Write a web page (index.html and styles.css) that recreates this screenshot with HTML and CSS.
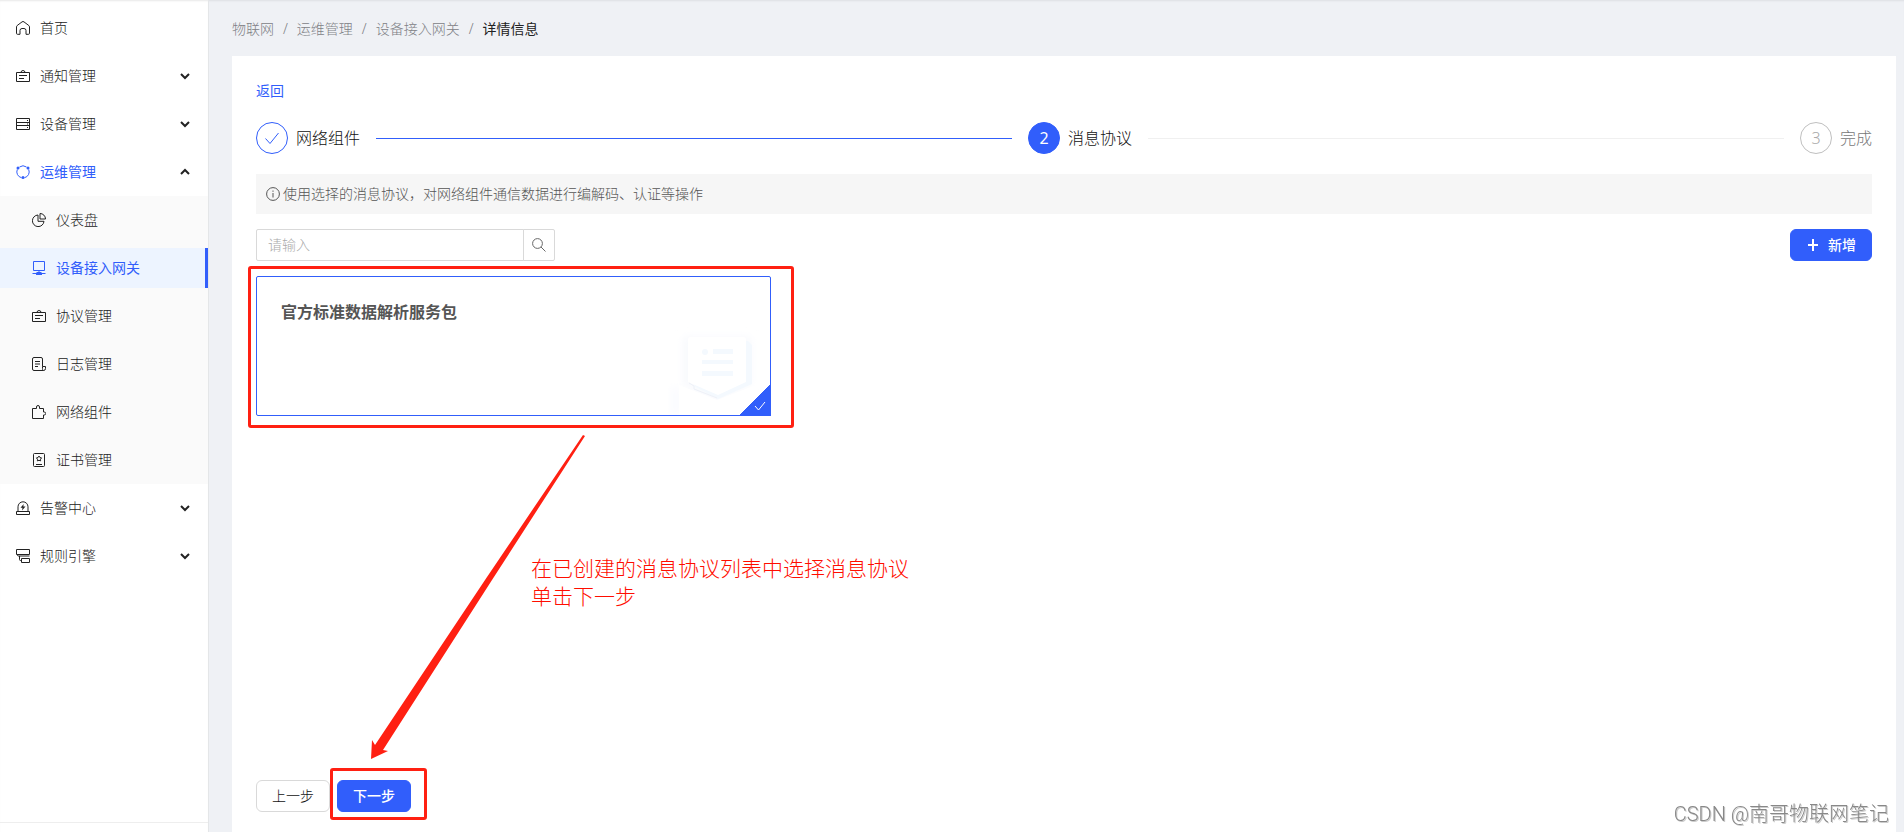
FILE: index.html
```html
<!DOCTYPE html>
<html lang="zh-CN">
<head>
<meta charset="utf-8">
<meta name="viewport" content="width=device-width, initial-scale=1">
<title>设备接入网关 - 详情信息</title>
<link rel="stylesheet" href="styles.css">
</head>
<body>
<svg class="symbols" aria-hidden="true">
  <symbol id="chevron" viewBox="0 0 10 10"><path d="M1 3l4 4 4-4" stroke-width="2"/></symbol>
  <symbol id="badge" viewBox="0 0 14 14"><path d="M.5 3.500h13v9H.5zM5 3.500a2 2 0 0 1 4 0M3 6.500h8M3 9.500h5"/></symbol>
</svg>
<div class="app">
  <aside class="sidebar">
    <nav class="menu">
      <a class="item" href="#"><svg class="icon" viewBox="0 0 14 14"><path d="M4 13.300H1.500a1 1 0 0 1-1-1V6a2 2 0 0 1 .7-1.500L6 .9a1.600 1.600 0 0 1 2 0l4.800 3.600A2 2 0 0 1 13.500 6v6.300a1 1 0 0 1-1 1H10V9.500a2 2 0 0 0-2-2H6a2 2 0 0 0-2 2z"/></svg>首页</a>
      <a class="item" href="#"><svg class="icon"><use href="#badge"/></svg>通知管理<svg class="chevron"><use href="#chevron"/></svg></a>
      <a class="item" href="#"><svg class="icon" viewBox="0 0 14 14"><path d="M.5 1.500h13v11H.5zM.5 5.500h13M.5 8.500h13M11 3.500h1M11 7h1M11 10.500h1"/></svg>设备管理<svg class="chevron"><use href="#chevron"/></svg></a>
      <a class="item open" href="#"><svg class="icon" viewBox="0 0 14 14"><path d="M3.500 2a6 6 0 0 1 7 0M12.700 4.500A6 6 0 0 1 8.500 12.700M5.500 12.700A6 6 0 0 1 1.300 4.500"/><circle class="dot" cx="2" cy="3" r="1.500"/><circle class="dot" cx="12" cy="3" r="1.500"/><circle class="dot" cx="7" cy="12.500" r="1.500"/></svg>运维管理<svg class="chevron up"><use href="#chevron"/></svg></a>
      <div class="submenu">
        <a class="item" href="#"><svg class="icon" viewBox="0 0 14 14"><path d="M6 2A5.800 5.800 0 1 0 12 8.300H6zM8 .5V6h5.500A5.500 5.500 0 0 0 8 .5z"/></svg>仪表盘</a>
        <a class="item current" href="#" aria-current="page"><svg class="icon" viewBox="0 0 14 14"><path d="M1.500.5h11v9h-11zM7 9.500V11M.5 12.500h13"/><path class="dot" d="M5 11h4l1 1v2H4v-2z"/></svg>设备接入网关</a>
        <a class="item" href="#"><svg class="icon"><use href="#badge"/></svg>协议管理</a>
        <a class="item" href="#"><svg class="icon" viewBox="0 0 14 14"><path d="M10.500 9.500V2a1.500 1.500 0 0 0-1.500-1.500H2A1.500 1.500 0 0 0 .5 2v10A1.500 1.500 0 0 0 2 13.500h9.500a2 2 0 0 0 2-2v-2h-3v2a2 2 0 0 0 1 2M3 4.500h5M3 7h5M3 9.500h3"/></svg>日志管理</a>
        <a class="item" href="#"><svg class="icon" viewBox="0 0 14 14"><path d="M.5 3.500h4V2a1.500 1.500 0 0 1 3 0v1.500h4V7h.700a1.500 1.500 0 0 1 0 3h-.7v3.500H.5z"/></svg>网络组件</a>
        <a class="item" href="#"><svg class="icon" viewBox="0 0 14 14"><rect x="1.500" y=".5" width="11" height="13" rx="1"/><path d="M4 11.500h6M7 3l.9 1.500 1.700.4-1.100 1.300.1 1.700L7 7.300l-1.600.6.1-1.700-1.100-1.300 1.700-.4z"/></svg>证书管理</a>
      </div>
      <a class="item" href="#"><svg class="icon" viewBox="0 0 14 14"><path d="M.5 10.500h13v3H.5zM2 10.500V5.800a5 5 0 0 1 10 0v4.700"/><path class="dot" d="M7.700 3L4.500 6.800h2L6 9.500l3.500-4H7.300z"/></svg>告警中心<svg class="chevron"><use href="#chevron"/></svg></a>
      <a class="item" href="#"><svg class="icon" viewBox="0 0 14 14"><path d="M.5.500h13v5H.5zM5.500 9.500h8v4h-8zM1.500 5.500V6a1 1 0 0 0 1 1h11M3.500 7v3.500a1 1 0 0 0 1 1h1"/></svg>规则引擎<svg class="chevron"><use href="#chevron"/></svg></a>
    </nav>
    <div class="sidebar-foot"></div>
  </aside>
  <main class="main">
    <nav class="crumbs" aria-label="面包屑">
      <a href="#">物联网</a><span>/</span><a href="#">运维管理</a><span>/</span><a href="#">设备接入网关</a><span>/</span><b>详情信息</b>
    </nav>
    <section class="panel">
      <a class="back" href="#">返回</a>
      <ol class="steps">
        <li class="step done"><span class="mark"><svg class="tick" viewBox="0 0 16 16"><path d="M1.500 8.500L6 13.500 14.500 3"/></svg></span><span class="label">网络组件</span></li>
        <li class="step active"><span class="mark">2</span><span class="label">消息协议</span></li>
        <li class="step wait"><span class="mark">3</span><span class="label">完成</span></li>
      </ol>
      <p class="tip"><svg class="icon" viewBox="0 0 14 14"><circle cx="7" cy="7" r="6.400"/><path d="M7 6v4.500M7 3.500v1.300"/></svg>使用选择的消息协议，对网络组件通信数据进行编解码、认证等操作</p>
      <div class="toolbar">
        <form class="search">
          <input type="text" placeholder="请输入" aria-label="搜索">
          <button type="button" aria-label="查询"><svg class="icon" viewBox="0 0 14 14"><circle cx="5.500" cy="5.500" r="4.900"/><path d="M9 9l4.500 4.500"/></svg></button>
        </form>
        <button class="btn primary add" type="button"><svg class="plus" viewBox="0 0 10 12"><path d="M5 0v12M0 6h10"/></svg>新增</button>
      </div>
      <div class="cards">
        <article class="card">
          <h3>官方标准数据解析服务包</h3>
          <svg class="art" viewBox="0 0 107 90" aria-hidden="true">
            <defs>
              <filter id="soft" x="-30%" y="-30%" width="160%" height="160%"><feGaussianBlur stdDeviation="4"/></filter>
            </defs>
            <path fill="#f8f9fd" filter="url(#soft)" d="M20 12h68v48l-36 16-32-16z"/>
            <path fill="#fafbfe" filter="url(#soft)" d="M8 62h10v28H8z"/>
            <path fill="#f4f9fe" d="M32 16h53l4 4v39L55 74 31 61z"/>
            <path fill="#fff" d="M28 12h52a3 3 0 0 1 3 3v42L55 70 25 57V15a3 3 0 0 1 3-3z"/>
            <path fill="#fff" d="M16 60l38 15 39-15v30H16z"/>
            <path fill="none" stroke="#eef1f8" d="M26 58l5 3v3l23 9"/>
            <g fill="#f4f9fe"><circle cx="42" cy="27" r="3"/><path d="M50 24h20v5H50zM39 35h31v4H39zM39 46h31v5H39z"/></g>
          </svg>
          <span class="corner"><svg viewBox="0 0 12 10"><path d="M1 5l3.500 4L11 1"/></svg></span>
          <span class="frame frame-card"></span>
        </article>
      </div>
      <div class="actions">
        <button class="btn" type="button">上一步</button>
        <span class="next"><button class="btn primary" type="button">下一步</button><span class="frame frame-next"></span></span>
      </div>
      <svg class="arrow" viewBox="0 0 216 326" aria-hidden="true"><path d="M1 325L2 306l3 5L117 143 213 1l2 1L122 146 13 316l5 1z"/></svg>
      <p class="note">在已创建的消息协议列表中选择消息协议<br>单击下一步</p>
    </section>
  </main>
</div>
<div class="watermark">CSDN @南哥物联网笔记</div>
</body>
</html>
```
FILE: styles.css
```css
* { box-sizing: border-box; }

body {
  margin: 0;
  font: 300 14px/22px "Noto Sans", "Noto Sans CJK SC", sans-serif;
  color: #222;
  background: #eff1f5;
}

a { color: inherit; text-decoration: none; }

button, input { font: inherit; }

.symbols { position: absolute; width: 0; height: 0; }

svg { fill: none; stroke: currentColor; }

.icon { flex: none; width: 14px; height: 14px; }
.icon .dot { fill: currentColor; stroke: none; }

.app {
  display: flex;
  min-height: 100vh;
  box-shadow: inset 0 2px 2px -1px #dddfe3;
}

/* Sidebar */
.sidebar {
  display: flex;
  flex-direction: column;
  flex: none;
  width: 209px;
  border-right: 1px solid #e4e6e8;
  background: #fff;
  box-shadow: inset 0 2px 2px -1px #e8e8e8;
}

.menu { flex: 1; padding-top: 4px; }

.item {
  display: flex;
  align-items: center;
  gap: 10px;
  height: 40px;
  margin: 4px 0 8px;
  padding: 0 18px 0 16px;
}

.open { color: #315efb; font-weight: 400; }

.chevron {
  width: 10px;
  height: 10px;
  margin-left: auto;
  color: #222;
}

.chevron.up { transform: rotate(180deg); }

.submenu {
  display: flow-root;
  margin: -4px 0 0;
  padding-bottom: 4px;
  background: #fafafa;
}

.submenu .item { margin-bottom: 8px; padding-left: 32px; }
.submenu .item + .item { margin-top: 8px; }
.submenu .item:last-child { margin-bottom: 0; }

.submenu .current {
  color: #315efb;
  font-weight: 400;
  background: #edf4ff;
  border-right: 3px solid #315efb;
}

.sidebar-foot { height: 10px; border-top: 1px solid #eee; }

/* Main column */
.main {
  display: flex;
  flex-direction: column;
  flex: 1;
  min-width: 0;
  padding: 18px 8px 0 23px;
}

.crumbs { display: flex; gap: 9px; margin-bottom: 16px; color: #808186; }
.crumbs b { font-weight: 400; color: #222; }

.panel {
  position: relative;
  display: flex;
  flex-direction: column;
  flex: 1;
  padding: 24px 24px 20px;
  background: #fff;
}

.back { align-self: flex-start; color: #315efb; font-weight: 400; }

/* Steps */
.steps {
  display: flex;
  gap: 16px;
  margin: 20px 0;
  padding: 0;
  list-style: none;
  font-size: 16px;
  line-height: 32px;
}

.step { display: flex; align-items: center; gap: 8px; flex: 1; color: #111; }
.step:last-child { flex: none; }

.step:not(:last-child)::after {
  content: "";
  flex: 1;
  height: 1px;
  margin-left: 8px;
  background: #f0f0f0;
}

.step.done::after { background: #315efb; }

.mark {
  display: grid;
  place-items: center;
  width: 32px;
  height: 32px;
  border: 1px solid #315efb;
  border-radius: 50%;
  color: #315efb;
  line-height: 30px;
}

.active .mark { color: #fff; background: #315efb; font-weight: 400; }
.step.wait { color: #777; }
.wait .mark { color: #aaa; border-color: #bfbfbf; }
.tick { width: 16px; height: 16px; }

.tip {
  display: flex;
  align-items: center;
  gap: 3px;
  height: 40px;
  margin: 0 0 15px;
  padding: 0 10px;
  color: #555;
  background: #f6f6f6;
}

/* Toolbar */
.toolbar { display: flex; justify-content: space-between; margin-bottom: 15px; }

.search { display: flex; width: 299px; height: 32px; }

.search input {
  flex: 1;
  min-width: 0;
  padding: 0 11px;
  border: 1px solid #d9d9d9;
  border-radius: 2px 0 0 2px;
}

.search input::placeholder { color: #aaa; }

.search button {
  display: grid;
  place-items: center;
  width: 32px;
  margin-left: -1px;
  padding: 0;
  border: 1px solid #d9d9d9;
  border-radius: 0 2px 2px 0;
  color: #666;
  background: #fff;
}

.btn {
  display: inline-flex;
  align-items: center;
  justify-content: center;
  height: 32px;
  padding: 0 15px;
  border: 1px solid #d9d9d9;
  border-radius: 6px;
  color: #111;
  background: #fff;
}

.btn.primary { border-color: #315efb; color: #fff; background: #315efb; font-weight: 500; }
.btn.add { gap: 10px; padding: 0 15px 0 17px; }
.plus { width: 10px; height: 12px; stroke-width: 2; }

/* Cards */
.cards { display: grid; grid-template-columns: repeat(3, 1fr); gap: 36px; }

.card {
  position: relative;
  height: 140px;
  padding: 24px;
  border: 1px solid #315efb;
  border-radius: 2px;
}

.card h3 { margin: 0; font-size: 16px; line-height: 22px; font-weight: 700; color: #555; }

.art { position: absolute; right: 0; bottom: 0; width: 107px; height: 90px; stroke: none; }

.corner {
  position: absolute;
  right: -1px;
  bottom: -1px;
  display: flex;
  align-items: flex-end;
  justify-content: flex-end;
  width: 32px;
  height: 32px;
  padding: 5px;
  color: #fff;
  background: linear-gradient(135deg, transparent 50%, #315efb 50%);
}

.corner svg { width: 12px; height: 10px; }

.actions { display: flex; gap: 7px; margin-top: auto; }
.next { position: relative; }

/* Annotations over the page */
.frame { position: absolute; border: 3px solid #ff2012; border-radius: 3px; pointer-events: none; }
.frame-card { inset: -11px -24px -13px -9px; }
.frame-next { inset: -12px -16px -8px -7px; }

.arrow {
  position: absolute;
  left: 138px;
  top: 378px;
  width: 216px;
  height: 326px;
  fill: #ff2012;
  stroke: none;
}

.note {
  position: absolute;
  left: 299px;
  top: 498px;
  margin: 0;
  font-size: 21px;
  line-height: 28px;
  color: #ff0d00;
  white-space: nowrap;
}

.watermark {
  position: fixed;
  right: 15px;
  bottom: 4px;
  font: 300 20px/28px Roboto, "Noto Sans CJK SC", sans-serif;
  color: #888;
  text-shadow: 1px 1px 0 #ccc;
}
```
